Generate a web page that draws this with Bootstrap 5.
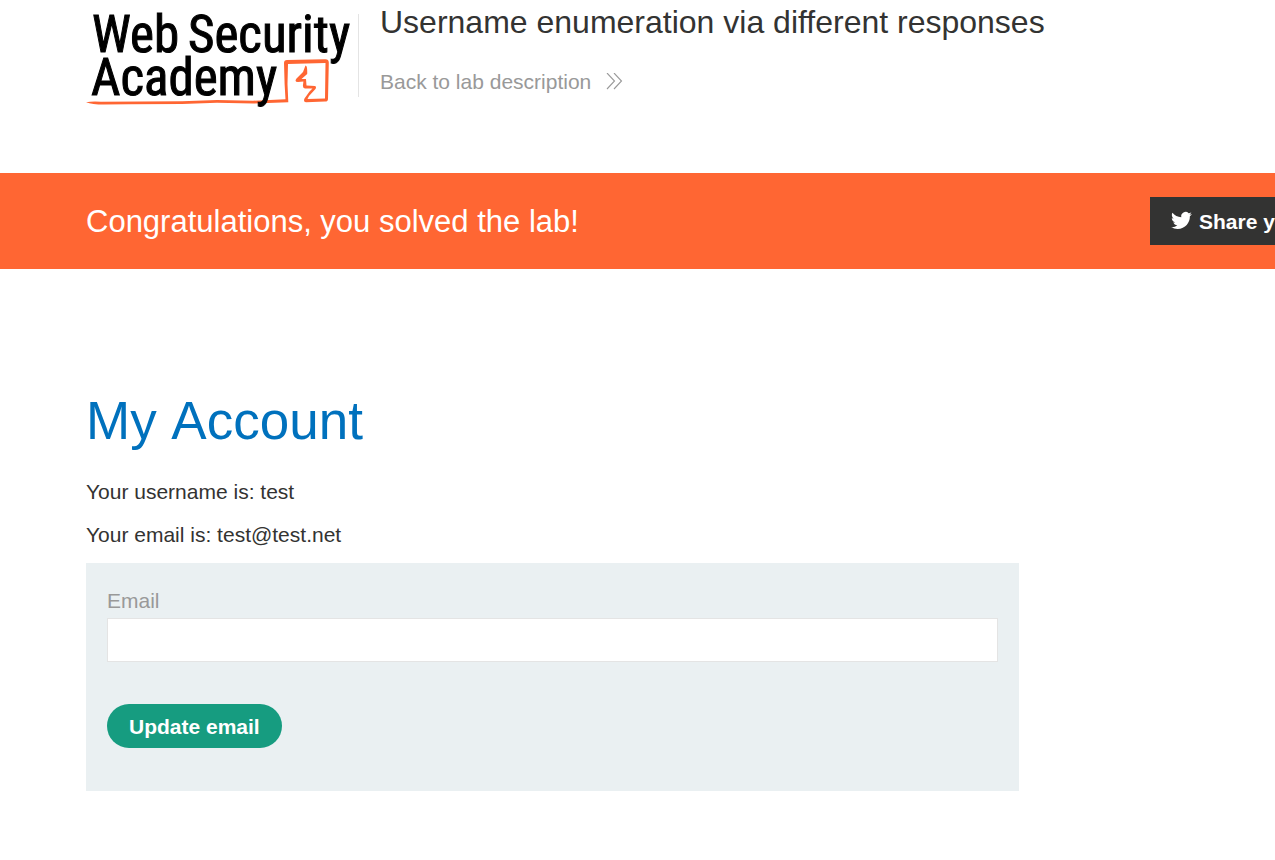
<!DOCTYPE html>
<html lang="en">
<head>
<meta charset="utf-8">
<meta name="viewport" content="width=device-width, initial-scale=1">
<title>Username enumeration via different responses</title>
<link href="https://cdn.jsdelivr.net/npm/bootstrap@5.3.0/dist/css/bootstrap.min.css" rel="stylesheet">
<style>
  body { font-family: "Liberation Sans", Arial, sans-serif; font-size: 21px; line-height: 32px; color: #333332; background: #fff; }
  .page-gutter { padding-left: 86px; }
  .lab-header { height: 173px; }
  .academy-logo { display: block; width: 272px; height: 112px; }
  .logo-word { font-family: "Roboto Condensed", "Liberation Sans Narrow", sans-serif; font-size: 51px; stroke: #000; stroke-width: 1; }
  .lab-intro { padding-left: 21px; }
  .lab-divider { width: 1px; height: 83px; margin-top: 14px; background: #e4e4e4; }
  .lab-title { font-size: 32px; line-height: 44px; font-weight: 400; margin: 0 0 22px; }
  .back-link { color: #999; text-decoration: none; gap: 15px; }
  .solved-banner { height: 96px; background: #ff6633; color: #fff; }
  .solved-text { font-size: 31px; line-height: 48px; font-weight: 400; margin: 0; padding-top: 2px; }
  .share-slot { width: 125px; height: 48px; }
  .share-btn { height: 48px; padding: 2px 21px 0; gap: 7px; background: #333332; color: #fff; border: 0; font-weight: 700; white-space: nowrap; }
  .share-btn svg { margin-bottom: 3px; }
  .account { padding-top: 116px; padding-bottom: 64px; }
  .account-title { font-size: 53px; line-height: 72px; font-weight: 400; font-kerning: none; color: #0071bd; margin: 0 0 19px; }
  .account-line { margin: 0 0 11px; }
  .email-form { max-width: 933px; margin-top: 12px; padding: 21px 21px 43px; background: #eaf0f2; }
  .email-form label { color: #999; line-height: 34px; }
  .email-input { height: 44px; border: 1px solid #e4e4e4; border-radius: 0; font-size: 21px; }
  .update-btn { height: 44px; margin-top: 42px; padding: 2px 22px 0; border: 0; border-radius: 22px; background: #169c80; color: #fff; font-weight: 700; }
</style>
</head>
<body>
<header class="lab-header page-gutter d-flex align-items-start">
  <a href="#" class="text-reset text-decoration-none flex-shrink-0" aria-label="Web Security Academy">
    <svg class="academy-logo" viewBox="86 0 272 112">
      <g class="logo-word">
        <text x="92" y="52">Web</text>
        <text x="188" y="52">Security</text>
      </g>
      <path fill="#ff6633" d="M86 102.200Q92 101.300 101 101.800L182 101.300L217 99.900L253 100.700L285.500 99.200L284.600 84L284 63Q284 60 287 60L325 59.200Q329 59 328.800 63L328 99Q328 101.500 325 101.600L306 102.200Q303 102 304.500 98.500L309.500 91.500L312.500 88.500L305 88.500Q302.500 88 303 85L303.400 81.500L298 82Q294 82 296.500 78.500L303 72L305.500 65.500Q307.500 65.500 307.200 74L301.500 79L306 79L306.500 85.500L315 86Q317 87 315 89.500L309 96L307.500 99L325 98.500L325.500 63L288 64L287.500 84L288.300 102.300L253 103.500L217 102.700L182 104L129 104.300L104 104.600Q92 104.600 86 102.200Z"/>
      <text class="logo-word" x="91" y="95">Academy</text>
    </svg>
  </a>
  <div class="lab-divider flex-shrink-0"></div>
  <div class="lab-intro">
    <h2 class="lab-title">Username enumeration via different responses</h2>
    <a href="#" class="back-link d-inline-flex align-items-center">Back to lab description
      <svg width="17" height="18" viewBox="0 0 17 18" fill="none" stroke="#999" stroke-width="1.100" aria-hidden="true"><path d="M1 0L8.500 8L1 16M8 0L15.500 8L8 16"/></svg>
    </a>
  </div>
</header>
<section class="solved-banner page-gutter d-flex align-items-center justify-content-between">
  <h4 class="solved-text">Congratulations, you solved the lab!</h4>
  <div class="share-slot overflow-hidden flex-shrink-0">
    <button type="button" class="share-btn d-inline-flex align-items-center">
      <svg class="flex-shrink-0" width="21" height="21" viewBox="0 0 24 24" fill="#fff" aria-hidden="true"><path d="M23.950 4.570a10 10 0 0 1-2.820.770 4.960 4.960 0 0 0 2.160-2.720c-.950.560-2 .960-3.130 1.180a4.920 4.920 0 0 0-8.380 4.480C7.690 8.100 4.070 6.130 1.640 3.160a4.820 4.820 0 0 0-.670 2.480c0 1.710.870 3.210 2.190 4.100a4.900 4.900 0 0 1-2.230-.620v.060a4.920 4.920 0 0 0 3.950 4.830 5 5 0 0 1-2.210.080 4.940 4.940 0 0 0 4.600 3.420A9.870 9.870 0 0 1 0 19.540a14 14 0 0 0 7.550 2.210c9.050 0 14-7.500 14-13.980l-.020-.640a9.940 9.940 0 0 0 2.420-2.560z"/></svg>
      Share your skills!
    </button>
  </div>
</section>
<main class="account page-gutter">
  <h1 class="account-title">My Account</h1>
  <p class="account-line">Your username is: test</p>
  <p class="account-line">Your email is: test@test.net</p>
  <form class="email-form">
    <label for="email" class="d-block">Email</label>
    <input id="email" type="email" name="email" class="form-control email-input">
    <button type="submit" class="update-btn">Update email</button>
  </form>
</main>
<script src="https://cdn.jsdelivr.net/npm/bootstrap@5.3.0/dist/js/bootstrap.bundle.min.js"></script>
</body>
</html>
